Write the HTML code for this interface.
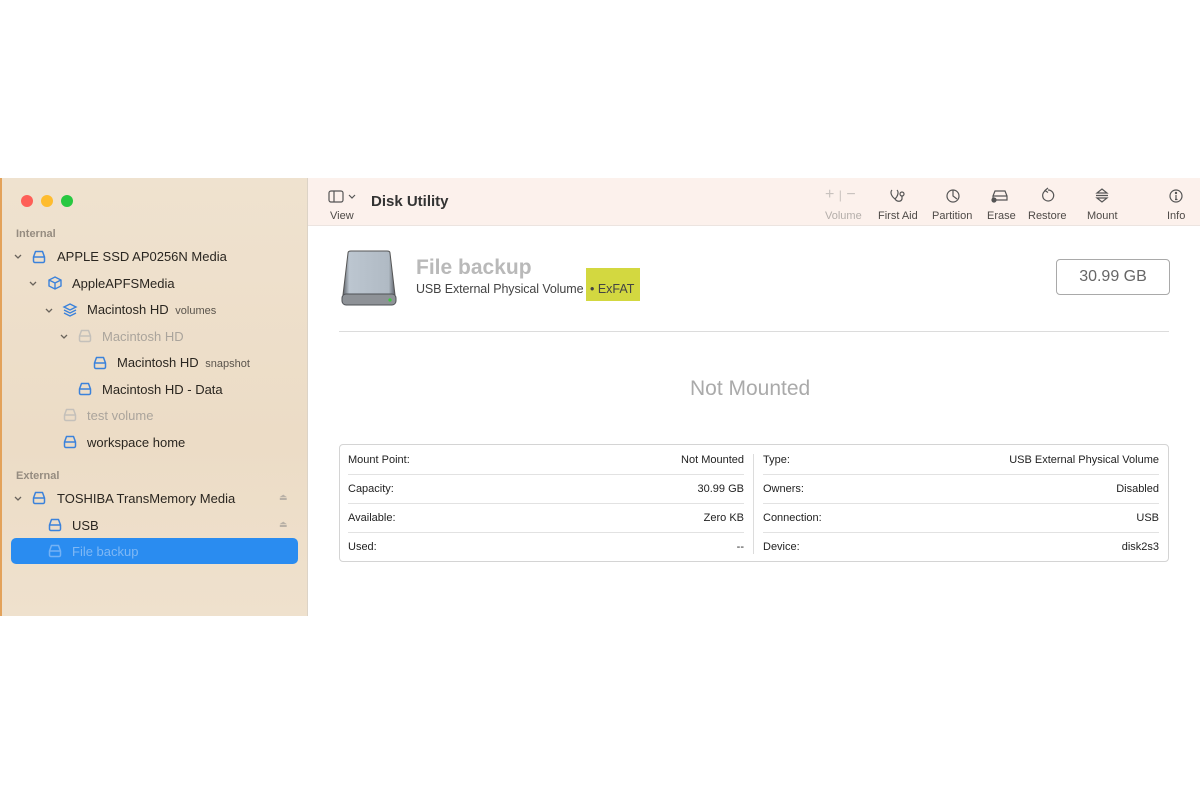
<!DOCTYPE html>
<html><head><meta charset="utf-8"><style>
*{margin:0;padding:0;box-sizing:border-box}
body{width:1200px;height:800px;background:#fff;position:relative;font-family:"Liberation Sans",sans-serif;overflow:hidden}
.a{position:absolute;white-space:nowrap}
#sb{position:absolute;left:0;top:178px;width:308px;height:438px;background:linear-gradient(180deg,#efe2cf,#ecdcc6 60%,#efe1cd);border-left:2px solid #e3a25a;border-right:1px solid #dcd3c6}
#tb{position:absolute;left:308px;top:178px;width:892px;height:48px;background:#fcf1ec;border-bottom:1px solid #ece4e0}
.si{font-size:13px;color:#2a2620}
.sec{font-size:11px;color:#958c80;font-weight:bold}
.tl{font-size:11px;color:#4e4a47;text-align:center}
.row{font-size:11px;color:#222}
.ln{position:absolute;height:1px;background:#e2e2e2}
</style></head><body>
<div id="sb">
 <div class="a" style="left:19px;top:17px;width:12px;height:12px;border-radius:50%;background:#fe5f57"></div>
 <div class="a" style="left:39px;top:17px;width:12px;height:12px;border-radius:50%;background:#febc2e"></div>
 <div class="a" style="left:59px;top:17px;width:12px;height:12px;border-radius:50%;background:#28c840"></div>
</div>
<svg width="0" height="0" style="position:absolute"><defs>
<g id="drv"><path d="M2.5 8 L4.5 2.5 H11.5 L13.5 8 V12 a1.5 1.5 0 0 1 -1.5 1.5 H4 a1.5 1.5 0 0 1 -1.5 -1.5 Z M2.5 8 H13.5" fill="none" stroke-width="1.5" stroke-linejoin="round"/></g>
<g id="chev"><path d="M1 1 L4 4 L7 1" fill="none" stroke="#6a645c" stroke-width="1.3"/></g>
</defs></svg>
<div class="a sec" style="left:16px;top:228px">Internal</div>
<svg class="a" style="left:14px;top:254px" width="8" height="6"><use href="#chev"/></svg>
<svg class="a" style="left:31px;top:249px" width="16" height="16" stroke="#3b82db"><use href="#drv"/></svg>
<div class="a si" style="left:57px;top:249px">APPLE SSD AP0256N Media</div>
<svg class="a" style="left:29px;top:281px" width="8" height="6"><use href="#chev"/></svg>
<svg class="a" style="left:47px;top:275px" width="16" height="16"><path d="M8 2 L14 5 V11 L8 14 L2 11 V5 Z M2 5 L8 8 L14 5 M8 8 V14" fill="none" stroke="#3b82db" stroke-width="1.4"/></svg>
<div class="a si" style="left:72px;top:276px">AppleAPFSMedia</div>
<svg class="a" style="left:45px;top:308px" width="8" height="6"><use href="#chev"/></svg>
<svg class="a" style="left:62px;top:302px" width="16" height="16"><path d="M8 2 L14 5 L8 8 L2 5 Z M2 8 L8 11 L14 8 M2 11 L8 14 L14 11" fill="none" stroke="#3b82db" stroke-width="1.4"/></svg>
<div class="a si" style="left:87px;top:302px">Macintosh HD <span style="font-size:11px;color:#5a544c">&nbsp;volumes</span></div>
<svg class="a" style="left:60px;top:334px" width="8" height="6"><use href="#chev"/></svg>
<svg class="a" style="left:77px;top:328px" width="16" height="16" stroke="#c4c0ba"><use href="#drv"/></svg>
<div class="a si" style="left:102px;top:329px;color:#aaa49c">Macintosh HD</div>
<svg class="a" style="left:92px;top:355px" width="16" height="16" stroke="#3b82db"><use href="#drv"/></svg>
<div class="a si" style="left:117px;top:355px">Macintosh HD <span style="font-size:11px;color:#5a544c">&nbsp;snapshot</span></div>
<svg class="a" style="left:77px;top:381px" width="16" height="16" stroke="#3b82db"><use href="#drv"/></svg>
<div class="a si" style="left:102px;top:382px">Macintosh HD - Data</div>
<svg class="a" style="left:62px;top:407px" width="16" height="16" stroke="#c4c0ba"><use href="#drv"/></svg>
<div class="a si" style="left:87px;top:408px;color:#aaa49c">test volume</div>
<svg class="a" style="left:62px;top:434px" width="16" height="16" stroke="#3b82db"><use href="#drv"/></svg>
<div class="a si" style="left:87px;top:435px">workspace home</div>
<div class="a sec" style="left:16px;top:470px">External</div>
<svg class="a" style="left:14px;top:496px" width="8" height="6"><use href="#chev"/></svg>
<svg class="a" style="left:31px;top:490px" width="16" height="16" stroke="#3b82db"><use href="#drv"/></svg>
<div class="a si" style="left:57px;top:491px">TOSHIBA TransMemory Media</div>
<div class="a" style="left:279px;top:492px;font-size:9px;color:#b8b0a6">⏏</div>
<svg class="a" style="left:47px;top:517px" width="16" height="16" stroke="#3b82db"><use href="#drv"/></svg>
<div class="a si" style="left:72px;top:518px">USB</div>
<div class="a" style="left:279px;top:519px;font-size:9px;color:#b8b0a6">⏏</div>
<div class="a" style="left:11px;top:538px;width:287px;height:26px;border-radius:5px;background:#2a8cf0"></div>
<svg class="a" style="left:47px;top:543px" width="16" height="16" stroke="#74b2f5"><use href="#drv"/></svg>
<div class="a si" style="left:72px;top:544px;color:#7fb8f5">File backup</div>
<div id="tb"></div>
<svg class="a" style="left:328px;top:190px" width="30" height="14"><rect x="1" y="1" width="14" height="11" rx="2" fill="none" stroke="#555" stroke-width="1.2"/><path d="M6 1 V12" stroke="#555" stroke-width="1.2"/><path d="M21 5 L24 8 L27 5" fill="none" stroke="#555" stroke-width="1.2"/></svg>
<div class="a tl" style="left:330px;top:210px">View</div>
<div class="a" style="left:371px;top:193px;font-size:15px;font-weight:bold;color:#333">Disk Utility</div>
<div class="a" style="left:825px;top:186px;font-size:16px;color:#c8c2be">+ <span style="font-size:12px">|</span> −</div>
<div class="a tl" style="left:825px;top:210px;color:#b4aeaa">Volume</div>
<svg class="a" style="left:889px;top:188px" width="18" height="16" fill="none" stroke="#555" stroke-width="1.2"><path d="M3 2 C1 4 2 8 6 11 C9 8 10 4 8 2 M6 11 C8 14 12 14 13 11 V8"/><circle cx="13" cy="6" r="2"/></svg>
<div class="a tl" style="left:878px;top:210px">First Aid</div>
<svg class="a" style="left:945px;top:188px" width="16" height="16" fill="none" stroke="#555" stroke-width="1.2"><circle cx="8" cy="8" r="6"/><path d="M8 2 V8 L12 11"/></svg>
<div class="a tl" style="left:932px;top:210px">Partition</div>
<svg class="a" style="left:990px;top:189px" width="20" height="14" fill="none" stroke="#555" stroke-width="1.2"><path d="M3 7 L5 2 H15 L17 7 V11 H3 Z M3 7 H17"/><circle cx="4" cy="11" r="2" fill="#555"/></svg>
<div class="a tl" style="left:987px;top:210px">Erase</div>
<svg class="a" style="left:1040px;top:187px" width="16" height="16" fill="none" stroke="#555" stroke-width="1.2"><path d="M5 4 A5.5 5.5 0 1 0 8 3 M8 1 L5 3.5 L8 5.5"/></svg>
<div class="a tl" style="left:1028px;top:210px">Restore</div>
<svg class="a" style="left:1094px;top:187px" width="16" height="17" fill="none" stroke="#555" stroke-width="1.2"><path d="M3 6 L8 2 L13 6 Z M3 11 L8 15 L13 11 Z M2 8.5 H14"/></svg>
<div class="a tl" style="left:1087px;top:210px">Mount</div>
<svg class="a" style="left:1168px;top:188px" width="16" height="16" fill="none" stroke="#555" stroke-width="1.2"><circle cx="8" cy="8" r="6"/><path d="M8 7 V11.5 M7 11.5 H9.5"/><circle cx="8" cy="5" r=".6" fill="#555"/></svg>
<div class="a tl" style="left:1167px;top:210px">Info</div>
<svg class="a" style="left:340px;top:249px" width="58" height="58"><defs><linearGradient id="g" x1="0" x2="1"><stop offset="0" stop-color="#5d6168"/><stop offset=".12" stop-color="#bcc6d0"/><stop offset=".88" stop-color="#b0bac4"/><stop offset="1" stop-color="#5d6168"/></linearGradient></defs><path d="M8 4 Q8 2 11 2 H47 Q50 2 50 4 L55 46 H3 Z" fill="url(#g)" stroke="#555" stroke-width="1"/><rect x="2" y="45" width="54" height="11" rx="4" fill="#8e9297" stroke="#4e5156"/><circle cx="50" cy="51" r="1.6" fill="#3ccb3c"/></svg>
<div class="a" style="left:416px;top:256px;font-size:21px;font-weight:bold;color:#b9b9b9">File backup</div>
<div class="a" style="left:586px;top:268px;width:54px;height:33px;background:#d3d840"></div>
<div class="a" style="left:416px;top:282px;font-size:12.5px;color:#444;letter-spacing:-0.1px">USB External Physical Volume</div>
<div class="a" style="left:590px;top:282px;font-size:12.5px;color:#444">• ExFAT</div>
<div class="a" style="left:1056px;top:259px;width:114px;height:36px;border:1px solid #a9a9a9;border-radius:4px;font-size:16px;color:#666;text-align:center;line-height:34px">30.99 GB</div>
<div class="ln" style="left:339px;top:331px;width:830px;background:#dcdcdc"></div>
<div class="a" style="left:690px;top:377px;font-size:21px;color:#aaa">Not Mounted</div>
<div class="a" style="left:339px;top:444px;width:830px;height:118px;border:1px solid #d4d4d4;border-radius:4px"></div>
<div class="ln" style="left:753px;top:454px;width:1px;height:100px;background:#dcdcdc"></div>
<div class="ln" style="left:348px;top:474px;width:396px"></div><div class="ln" style="left:348px;top:503px;width:396px"></div><div class="ln" style="left:348px;top:532px;width:396px"></div>
<div class="ln" style="left:763px;top:474px;width:396px"></div><div class="ln" style="left:763px;top:503px;width:396px"></div><div class="ln" style="left:763px;top:532px;width:396px"></div>
<div class="a row" style="left:348px;top:454px">Mount Point:</div><div class="a row" style="right:456px;top:454px">Not Mounted</div>
<div class="a row" style="left:348px;top:483px">Capacity:</div><div class="a row" style="right:456px;top:483px">30.99 GB</div>
<div class="a row" style="left:348px;top:512px">Available:</div><div class="a row" style="right:456px;top:512px">Zero KB</div>
<div class="a row" style="left:348px;top:541px">Used:</div><div class="a row" style="right:456px;top:541px">--</div>
<div class="a row" style="left:763px;top:454px">Type:</div><div class="a row" style="right:41px;top:454px">USB External Physical Volume</div>
<div class="a row" style="left:763px;top:483px">Owners:</div><div class="a row" style="right:41px;top:483px">Disabled</div>
<div class="a row" style="left:763px;top:512px">Connection:</div><div class="a row" style="right:41px;top:512px">USB</div>
<div class="a row" style="left:763px;top:541px">Device:</div><div class="a row" style="right:41px;top:541px">disk2s3</div>
</body></html>
